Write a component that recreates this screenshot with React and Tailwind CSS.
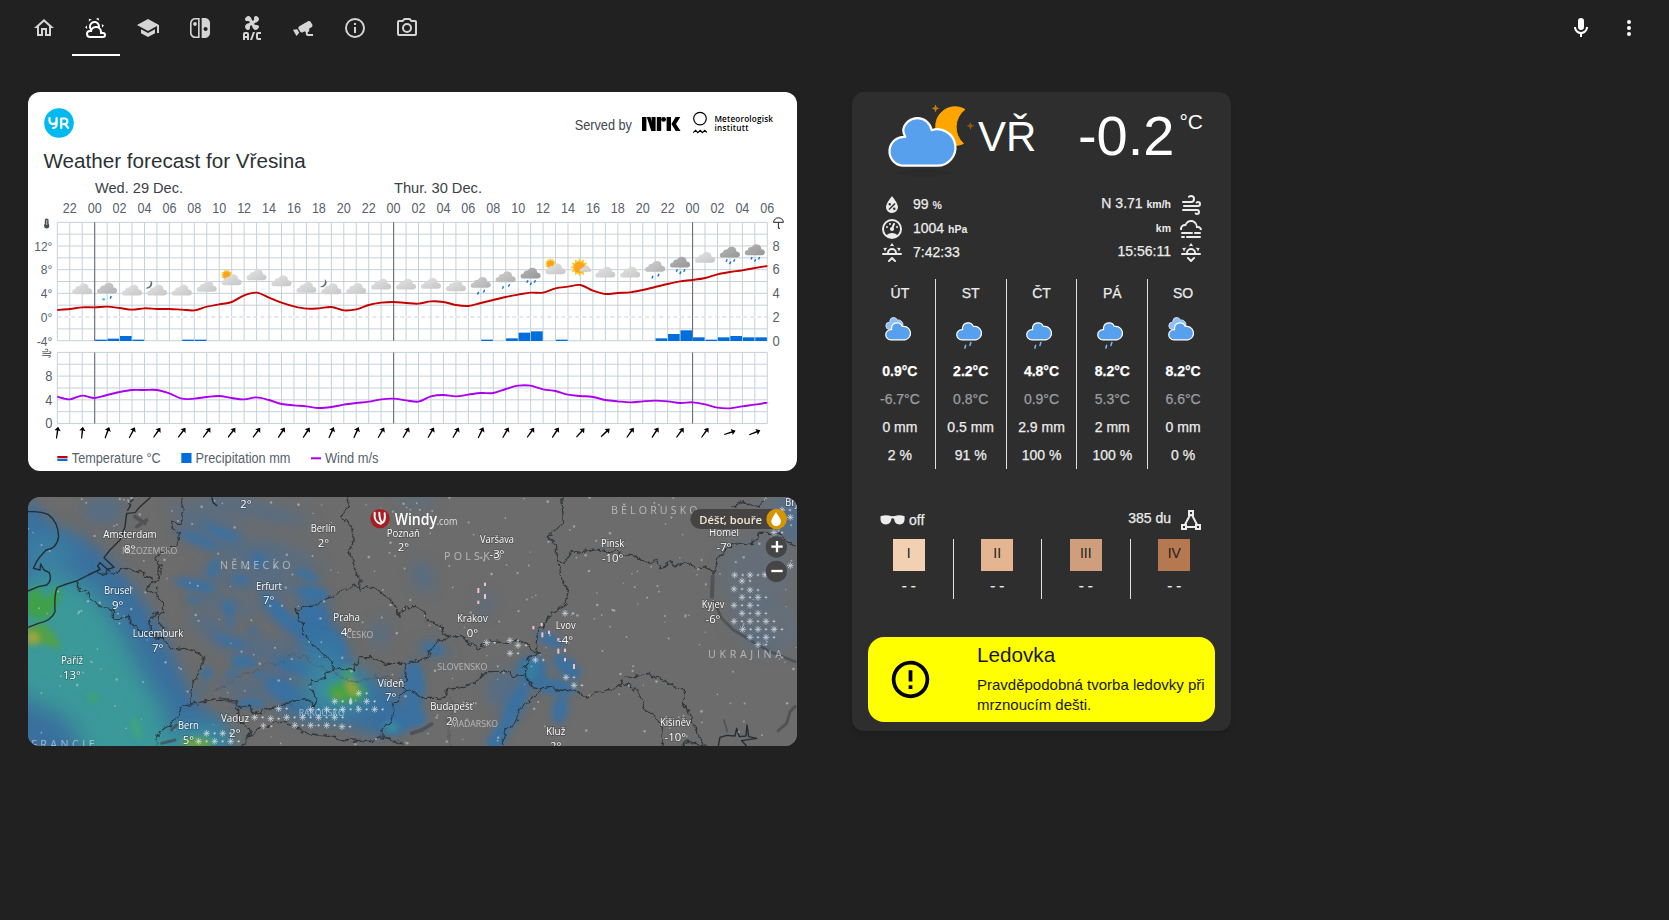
import React from "react";

const P = {
  home: "M12 5.69L17 10.19V18H15V12H9V18H7V10.19L12 5.69M12 3L2 12H5V20H11V14H13V20H19V12H22",
  partly:
    "M12.74,5.47C15.1,6.5 16.35,9.03 15.92,11.46C17.19,12.56 18,14.19 18,16V16.17C18.31,16.06 18.65,16 19,16A3,3 0 0,1 22,19A3,3 0 0,1 19,22H6A4,4 0 0,1 2,18A4,4 0 0,1 6,14H6.27C5,12.45 4.6,10.24 5.5,8.26C6.72,5.5 9.97,4.24 12.74,5.47M11.93,7.3C10.16,6.5 8.09,7.31 7.31,9.07C6.85,10.09 6.93,11.22 7.41,12.13C8.5,10.83 10.16,10 12,10C12.7,10 13.38,10.12 14,10.34C13.94,9.06 13.18,7.86 11.93,7.3M13.55,3.64C13,3.4 12.45,3.23 11.88,3.12L14.37,1.82L15.27,4.71C14.76,4.29 14.19,3.93 13.55,3.64M6.09,4.44C5.6,4.79 5.17,5.19 4.8,5.63L4.91,2.82L7.87,3.5C7.25,3.71 6.65,4.03 6.09,4.44M18,9.71C17.91,9.12 17.78,8.55 17.59,8L19.97,9.5L17.92,11.73C18.03,11.08 18.05,10.4 18,9.71M3.04,11.3C3.11,11.9 3.24,12.47 3.43,13L1.06,11.5L3.1,9.28C3,9.93 2.97,10.61 3.04,11.3M19,18H16V16A4,4 0 0,0 12,12A4,4 0 0,0 8,16H6A2,2 0 0,0 4,18A2,2 0 0,0 6,20H19A1,1 0 0,0 20,19A1,1 0 0,0 19,18Z",
  school: "M12,3L1,9L12,15L21,10.09V17H23V9M5,13.18V17.18L12,21L19,17.18V13.18L12,17L5,13.18Z",
  nswitch:
    "M10.04,20.4H7.12C6.19,20.4 5.3,20 4.64,19.36C4,18.7 3.6,17.81 3.6,16.88V7.12C3.6,6.19 4,5.3 4.64,4.64C5.3,4 6.19,3.62 7.12,3.62H10.04V20.4M7.12,2A5.12,5.12 0 0,0 2,7.12V16.88C2,19.71 4.29,22 7.12,22H11.65V2H7.12M5.11,8C5.11,9.04 5.95,9.88 7,9.88C8.03,9.88 8.87,9.04 8.87,8C8.87,6.96 8.03,6.12 7,6.12C5.95,6.12 5.11,6.96 5.11,8M17.61,11C18.72,11 19.62,11.89 19.62,13C19.62,14.12 18.72,15 17.61,15C16.5,15 15.58,14.12 15.58,13C15.58,11.89 16.5,11 17.61,11M16.88,22A5.12,5.12 0 0,0 22,16.88V7.12C22,4.29 19.71,2 16.88,2H13.65V22H16.88Z",
  ac: "M6.59,0.66C8.93,-1.15 11.47,1.06 12.04,4.5C12.47,4.5 12.89,4.62 13.27,4.84C13.79,4.24 14.25,3.42 14.07,2.5C13.65,0.35 16.06,-1.39 18.35,1.58C20.16,3.92 17.95,6.46 14.5,7.03C14.5,7.46 14.39,7.89 14.16,8.27C14.76,8.78 15.58,9.24 16.5,9.06C18.63,8.64 20.38,11.04 17.41,13.34C15.07,15.15 12.53,12.94 11.96,9.5C11.53,9.5 11.11,9.37 10.74,9.15C10.22,9.75 9.75,10.58 9.93,11.5C10.35,13.64 7.94,15.39 5.65,12.42C3.83,10.07 6.05,7.53 9.5,6.97C9.5,6.54 9.63,6.12 9.85,5.74C9.25,5.23 8.43,4.76 7.5,4.94C5.37,5.36 3.62,2.96 6.59,0.66M5,16H7A2,2 0 0,1 9,18V24H7V22H5V24H3V18A2,2 0 0,1 5,16M5,18V20H7V18H5M12.93,16H15L12.07,24H10L12.93,16M18,16H21V18H18V22H21V24H18A2,2 0 0,1 16,22V18A2,2 0 0,1 18,16Z",
  cctv: "M18.15,4.94C17.77,4.91 17.37,5 17,5.2L8.35,10.2C7.39,10.76 7.07,12 7.62,12.94L9.12,15.53C9.67,16.5 10.89,16.82 11.85,16.27L13.65,15.23C13.92,15.69 14.32,16.06 14.81,16.27V18.04C14.81,19.13 15.7,20 16.81,20H22V18.04H16.81V16.27C17.72,15.87 18.31,14.97 18.31,14C18.31,13.54 18.19,13.11 17.97,12.73L20.5,11.27C21.47,10.71 21.8,9.5 21.24,8.53L19.74,5.94C19.4,5.34 18.79,5 18.15,4.94M6.22,13.17L2,13.87L2.75,15.17L4.75,18.63L5.5,19.93L8.22,16.63L6.22,13.17Z",
  info: "M11,9H13V7H11M12,20C7.59,20 4,16.41 4,12C4,7.59 7.59,4 12,4C16.41,4 20,7.59 20,12C20,16.41 16.41,20 12,20M12,2A10,10 0 0,0 2,12A10,10 0 0,0 12,22A10,10 0 0,0 22,12A10,10 0 0,0 12,2M11,17H13V11H11V17Z",
  camera:
    "M20,4H16.83L15,2H9L7.17,4H4A2,2 0 0,0 2,6V18A2,2 0 0,0 4,20H20A2,2 0 0,0 22,18V6A2,2 0 0,0 20,4M20,18H4V6H8.05L9.88,4H14.12L15.95,6H20V18M12,7A5,5 0 0,0 7,12A5,5 0 0,0 12,17A5,5 0 0,0 17,12A5,5 0 0,0 12,7M12,15A3,3 0 0,1 9,12A3,3 0 0,1 12,9A3,3 0 0,1 15,12A3,3 0 0,1 12,15Z",
  mic: "M12,2A3,3 0 0,1 15,5V11A3,3 0 0,1 12,14A3,3 0 0,1 9,11V5A3,3 0 0,1 12,2M19,11C19,14.53 16.39,17.44 13,17.93V21H11V17.93C7.61,17.44 5,14.53 5,11H7A5,5 0 0,0 12,16A5,5 0 0,0 17,11H19Z",
  dots: "M12,16A2,2 0 0,1 14,18A2,2 0 0,1 12,20A2,2 0 0,1 10,18A2,2 0 0,1 12,16M12,10A2,2 0 0,1 14,12A2,2 0 0,1 12,14A2,2 0 0,1 10,12A2,2 0 0,1 12,10M12,4A2,2 0 0,1 14,6A2,2 0 0,1 12,8A2,2 0 0,1 10,6A2,2 0 0,1 12,4Z",
  humidity:
    "M12,3.25C12,3.25 6,10 6,14C6,17.32 8.69,20 12,20A6,6 0 0,0 18,14C18,10 12,3.25 12,3.25M14.47,9.97L15.53,11.03L9.53,17.03L8.47,15.97M9.75,10A1.25,1.25 0 0,1 11,11.25A1.25,1.25 0 0,1 9.75,12.5A1.25,1.25 0 0,1 8.5,11.25A1.25,1.25 0 0,1 9.75,10M14.25,14.5A1.25,1.25 0 0,1 15.5,15.75A1.25,1.25 0 0,1 14.25,17A1.25,1.25 0 0,1 13,15.75A1.25,1.25 0 0,1 14.25,14.5Z",
  gauge:
    "M12,2A10,10 0 0,0 2,12A10,10 0 0,0 12,22A10,10 0 0,0 22,12A10,10 0 0,0 12,2M12,4A8,8 0 0,1 20,12C20,14.4 19,16.5 17.3,18C15.9,16.7 14,16 12,16C10,16 8.2,16.7 6.7,18C5,16.5 4,14.4 4,12A8,8 0 0,1 12,4M14,5.89C13.62,5.9 13.26,6.15 13.1,6.54L11.81,9.77L11.71,10C11,10.13 10.41,10.6 10.14,11.26C9.73,12.29 10.23,13.45 11.26,13.86C12.29,14.27 13.45,13.77 13.86,12.74C14.12,12.08 14,11.32 13.57,10.76L13.67,10.5L14.96,7.29L14.97,7.26C15.17,6.75 14.92,6.17 14.41,5.96C14.28,5.91 14.15,5.89 14,5.89M10,6A1,1 0 0,0 9,7A1,1 0 0,0 10,8A1,1 0 0,0 11,7A1,1 0 0,0 10,6M7,9A1,1 0 0,0 6,10A1,1 0 0,0 7,11A1,1 0 0,0 8,10A1,1 0 0,0 7,9M17,9A1,1 0 0,0 16,10A1,1 0 0,0 17,11A1,1 0 0,0 18,10A1,1 0 0,0 17,9Z",
  windy:
    "M4,10A1,1 0 0,1 3,9A1,1 0 0,1 4,8H12A2,2 0 0,0 14,6A2,2 0 0,0 12,4C11.45,4 10.95,4.22 10.59,4.59C10.2,5 9.56,5 9.17,4.59C8.78,4.2 8.78,3.56 9.17,3.17C9.9,2.45 10.9,2 12,2A4,4 0 0,1 16,6A4,4 0 0,1 12,10H4M19,12A1,1 0 0,0 20,11A1,1 0 0,0 19,10C18.72,10 18.47,10.11 18.29,10.29C17.9,10.68 17.27,10.68 16.88,10.29C16.5,9.9 16.5,9.27 16.88,8.88C17.42,8.34 18.17,8 19,8A3,3 0 0,1 22,11A3,3 0 0,1 19,14H5A1,1 0 0,1 4,13A1,1 0 0,1 5,12H19M18,18H4A1,1 0 0,1 3,17A1,1 0 0,1 4,16H18A3,3 0 0,1 21,19A3,3 0 0,1 18,22C17.17,22 16.42,21.66 15.88,21.12C15.5,20.73 15.5,20.1 15.88,19.71C16.27,19.32 16.9,19.32 17.29,19.71C17.47,19.89 17.72,20 18,20A1,1 0 0,0 19,19A1,1 0 0,0 18,18Z",
  fog: "M3,15H13A1,1 0 0,1 14,16A1,1 0 0,1 13,17H3A1,1 0 0,1 2,16A1,1 0 0,1 3,15M16,15H21A1,1 0 0,1 22,16A1,1 0 0,1 21,17H16A1,1 0 0,1 15,16A1,1 0 0,1 16,15M1,12A5,5 0 0,1 6,7C7,4.65 9.3,3 12,3C15.43,3 18.24,5.66 18.5,9.03L19,9C21.19,9 22.97,10.76 23,13H21A2,2 0 0,0 19,11H17V10A5,5 0 0,0 12,5C9.5,5 7.45,6.82 7.06,9.19C6.73,9.07 6.37,9 6,9A3,3 0 0,0 3,12C3,12.35 3.06,12.69 3.17,13H1.1L1,12M3,19H5A1,1 0 0,1 6,20A1,1 0 0,1 5,21H3A1,1 0 0,1 2,20A1,1 0 0,1 3,19M8,19H21A1,1 0 0,1 22,20A1,1 0 0,1 21,21H8A1,1 0 0,1 7,20A1,1 0 0,1 8,19Z",
  horizon:
    "M3,12H7A5,5 0 0,1 12,7A5,5 0 0,1 17,12H21A1,1 0 0,1 22,13A1,1 0 0,1 21,14H3A1,1 0 0,1 2,13A1,1 0 0,1 3,12M15,12A3,3 0 0,0 12,9A3,3 0 0,0 9,12H15M12,2L14.39,5.42C13.65,5.15 12.84,5 12,5C11.16,5 10.35,5.15 9.61,5.42L12,2M3.34,7L7.5,6.65C6.9,7.16 6.36,7.78 5.94,8.5C5.5,9.24 5.25,10 5.11,10.79L3.34,7M20.65,7L18.88,10.79C18.74,10 18.47,9.23 18.05,8.5C17.63,7.78 17.1,7.15 16.5,6.64L20.65,7",
  up: "M12.71,16.3L15.82,19.41C16.21,19.8 16.21,20.43 15.82,20.82C15.43,21.21 14.8,21.21 14.41,20.82L12,18.41L9.59,20.82C9.2,21.21 8.57,21.21 8.18,20.82C7.79,20.43 7.79,19.8 8.18,19.41L11.29,16.3C11.5,16.1 11.74,16 12,16C12.26,16 12.5,16.1 12.71,16.3Z",
  down: "M12.71,20.71L15.82,17.6C16.21,17.21 16.21,16.57 15.82,16.18C15.43,15.79 14.8,15.79 14.41,16.18L12,18.59L9.59,16.18C9.2,15.79 8.57,15.79 8.18,16.18C7.79,16.57 7.79,17.21 8.18,17.6L11.29,20.71C11.5,20.9 11.74,21 12,21C12.26,21 12.5,20.9 12.71,20.71Z",
  alert:
    "M11,15H13V17H11V15M11,7H13V13H11V7M12,2C6.47,2 2,6.5 2,12A10,10 0 0,0 12,22A10,10 0 0,0 22,12A10,10 0 0,0 12,2M12,20A8,8 0 0,1 4,12A8,8 0 0,1 12,4A8,8 0 0,1 20,12A8,8 0 0,1 12,20Z",
};

function Icon({ d, className = "size-6" }) {
  return (
    <svg viewBox="0 0 24 24" fill="currentColor" className={className + " shrink-0"}>
      <path d={d} />
    </svg>
  );
}

const TABS = [P.home, P.partly, P.school, P.nswitch, P.ac, P.cctv, P.info, P.camera];

function Toolbar() {
  return (
    <header className="flex h-14 shrink-0 items-stretch justify-between pl-5 pr-7">
      <nav className="flex gap-1">
        {TABS.map((d, i) => (
          <button
            key={i}
            className={
              "flex w-12 items-center justify-center border-b-2 pt-0.5 " +
              (i === 5 ? "-ml-px " : "") +
              (i === 1 ? "border-white text-white" : "border-transparent text-[#d5d5d5]")
            }
          >
            <Icon d={d} />
          </button>
        ))}
      </nav>
      <div className="flex items-center gap-6 text-white">
        <Icon d={P.mic} />
        <Icon d={P.dots} />
      </div>
    </header>
  );
}

/* ---------- Meteogram ---------- */

const X0 = 57.3;
const STEP = 12.456;
const hx = (i) => X0 + STEP * i;
const zy = (z) => 270 + z / 3;

const TEMP = [
  120, 117, 112, 112, 110, 114, 119, 115, 117, 117, 119, 121, 110, 103, 96, 76, 68, 83, 98, 109, 116, 115, 111, 121,
  118, 105, 98, 96, 99, 101, 94, 96, 105, 108, 99, 90, 81, 74, 68, 68, 55, 50, 45, 62, 72, 69, 67, 60, 51, 42, 34, 30,
  24, 13, 6, 1, -6, -12,
];
const WIND = [
  380, 388, 377, 384, 375, 366, 360, 360, 360, 370, 386, 386, 381, 378, 384, 388, 382, 390, 402, 406, 409, 414, 411,
  404, 399, 395, 388, 386, 391, 395, 379, 375, 379, 374, 369, 369, 357, 347, 347, 358, 363, 374, 378, 381, 390, 394,
  397, 394, 392, 394, 399, 397, 403, 413, 415, 409, 404, 398,
];
const RAIN = [
  [3, 209], [4, 206], [5, 198], [6, 209], [10, 209], [11, 209], [34, 209], [36, 205], [37, 188], [38, 184], [40, 209],
  [48, 205], [49, 192], [50, 181], [51, 202], [52, 209], [53, 202], [54, 198], [55, 202], [56, 202],
];
const SKY = [
  [2, 57, "l"], [4, 55, "m", "sleet"], [6, 61, "l"], [8, 61, "l", "moon"], [10, 61, "l"], [12, 50, "l"],
  [14, 30, "l", "sun"], [16, 15, "l"], [18, 33, "l"], [20, 53, "l"], [22, 57, "l", "moon"], [24, 56, "l"],
  [26, 43, "l"], [28, 43, "l"], [30, 41, "l"], [32, 48, "l"], [34, 38, "m", "r2"], [36, 21, "m", "r2"],
  [38, 10, "d", "r3"], [40, -3, "l", "sun"], [42, -8, "fair"], [44, 7, "l"], [46, 7, "l"], [48, -10, "m", "r2"],
  [50, -23, "d", "r3"], [52, -37, "l"], [54, -53, "d", "r3"], [56, -60, "d", "r3"],
];
const ARROWS = [8, 6, 20, 28, 35, 38, 37, 38, 37, 33, 33, 24, 24, 30, 30, 30, 30, 26, 30, 36, 33, 42, 46, 36, 33, 37, 36, 72, 68];

function smooth(values) {
  const pts = values.map((v, i) => [hx(i), zy(v)]);
  let d = `M${pts[0][0]},${pts[0][1]}`;
  for (let i = 0; i < pts.length - 1; i++) {
    const a = pts[Math.max(0, i - 1)];
    const b = pts[i];
    const c = pts[i + 1];
    const e = pts[Math.min(pts.length - 1, i + 2)];
    d += `C${b[0] + (c[0] - a[0]) / 6},${b[1] + (c[1] - a[1]) / 6} ${c[0] - (e[0] - b[0]) / 6},${c[1] - (e[1] - b[1]) / 6} ${c[0]},${c[1]}`;
  }
  return d;
}

const TONES = { l: "url(#cl)", m: "url(#cm)", d: "url(#cd)" };

function GreyCloud({ tone, s = 1 }) {
  return (
    <path
      transform={`scale(${s})`}
      fill={TONES[tone]}
      d="M-7.5,5.2C-9.3,5.2 -10.2,4 -10.1,2.6C-10,1 -8.6,0 -7,0.1C-6.8,-2 -5.2,-3.2 -3,-2.8C-1.8,-5 0,-6 2.4,-5.6C5.6,-5.2 6.6,-2.8 6.4,-0.8C8.6,-0.9 10.1,0.6 10,2.4C9.9,4.2 8.6,5.2 6.8,5.2Z"
    />
  );
}

function Sun({ x, y, r }) {
  const rays = Array.from({ length: 24 }, (_, i) => {
    const a = (Math.PI * i) / 12;
    const q = i % 2 ? r * 0.68 : r;
    return `${x + Math.cos(a) * q},${y + Math.sin(a) * q}`;
  }).join(" ");
  return (
    <g>
      <polygon points={rays} fill="#fccb3c" />
      <circle cx={x} cy={y} r={r * 0.6} fill="#fba31a" />
    </g>
  );
}

function Drops({ xs }) {
  return xs.map(([x, y], k) => (
    <path key={k} d={`M${x + 0.8},${y - 1.3}L${x - 0.3},${y + 1.3}`} stroke="#1371cf" strokeWidth="1.4" />
  ));
}

function SkyIcon({ tone, extra }) {
  if (tone === "fair")
    return (
      <g>
        <Sun x={-1} y={0} r={9.2} />
        <g transform="translate(5 1.5)">
          <GreyCloud tone="l" s={0.58} />
        </g>
      </g>
    );
  return (
    <g>
      {extra === "sun" && <Sun x={-5} y={-5} r={6} />}
      {extra === "moon" && <path d="M-6,-9.3A4.5,4.5 0 0 1 -10.8,-2.2A6,6 0 0 0 -6,-9.3Z" fill="#5c6470" stroke="#5c6470" strokeWidth="0.5" />}
      <GreyCloud tone={tone} />
      {extra === "r2" && <Drops xs={[[-3, 10.5], [3, 8.5]]} />}
      {extra === "r3" && <Drops xs={[[-3.5, 8.2], [0, 10.5], [4, 8.2]]} />}
      {extra === "sleet" && (
        <g>
          <circle cx="-3.4" cy="11" r="1.4" fill="#4cc3ee" />
          <Drops xs={[[3.4, 9]]} />
        </g>
      )}
    </g>
  );
}

const GRID = "#c5d1d9";

function Label({ x, y, w, size = 14, fill = "#56616c", anchor = "start", children }) {
  return (
    <text x={x} y={y} fontSize={size} fill={fill} textAnchor={anchor} textLength={w} lengthAdjust="spacingAndGlyphs">
      {children}
    </text>
  );
}

function Meteogram() {
  const hours = Array.from({ length: 29 }, (_, k) => 2 * k + 1);
  const rowsA = Array.from({ length: 11 }, (_, k) => 222.3 + 11.84 * k);
  const rowsB = Array.from({ length: 7 }, (_, k) => 352.4 + 11.86 * k);
  return (
    <svg viewBox="28 176 769 295" className="block h-[295px] w-[769px]" fontFamily="'Liberation Sans', Arial, sans-serif">
      <defs>
        <linearGradient id="cl" x1="0" x2="1" y1="0" y2="1">
          <stop offset="0" stopColor="#e4e4e4" />
          <stop offset="1" stopColor="#c6c6c6" />
        </linearGradient>
        <linearGradient id="cm" x1="0" x2="1" y1="0" y2="1">
          <stop offset="0" stopColor="#cfcfcf" />
          <stop offset="1" stopColor="#b2b2b2" />
        </linearGradient>
        <linearGradient id="cd" x1="0" x2="1" y1="0" y2="1">
          <stop offset="0" stopColor="#b4b4b4" />
          <stop offset="1" stopColor="#979797" />
        </linearGradient>
      </defs>

      <Label x={95} y={193} w={88} size={15} fill="#3a4247">Wed. 29 Dec.</Label>
      <Label x={394} y={193} w={88} size={15} fill="#3a4247">Thur. 30 Dec.</Label>
      {hours.map((h) => (
        <Label key={h} x={hx(h)} y={213.3} w={14} anchor="middle">
          {String((21 + h) % 24).padStart(2, "0")}
        </Label>
      ))}

      <g stroke={GRID} strokeWidth="1">
        {Array.from({ length: 58 }, (_, i) => (
          <React.Fragment key={i}>
            <line x1={hx(i)} x2={hx(i)} y1="222.3" y2="340.7" />
            <line x1={hx(i)} x2={hx(i)} y1="352.4" y2="423.6" />
          </React.Fragment>
        ))}
        {rowsA.map((y, k) =>
          k === 8 ? (
            <g key={k}>
              <line x1={X0} x2={hx(57)} y1={y} y2={y} stroke="#fff" />
              <line x1={X0} x2={hx(57)} y1={y} y2={y} strokeDasharray="4 3" />
            </g>
          ) : (
            <line key={k} x1={X0} x2={hx(57)} y1={y} y2={y} />
          )
        )}
        {rowsB.map((y, k) => (
          <line key={k} x1={X0} x2={hx(57)} y1={y} y2={y} />
        ))}
      </g>

      {RAIN.map(([i, z]) => (
        <rect key={i} x={hx(i) + 0.4} y={zy(z)} width={STEP - 0.8} height={zy(213) - zy(z)} fill="#006edb" />
      ))}

      <g stroke="#6b7079" strokeWidth="1.1">
        {[3, 27, 51].map((i) => (
          <React.Fragment key={i}>
            <line x1={hx(i)} x2={hx(i)} y1="222.3" y2="340.7" />
            <line x1={hx(i)} x2={hx(i)} y1="352.4" y2="423.6" />
          </React.Fragment>
        ))}
      </g>

      <path d={smooth(TEMP)} fill="none" stroke="#c60000" strokeWidth="1.9" />
      <path d={smooth(WIND)} fill="none" stroke="#aa00f2" strokeWidth="1.9" />

      {SKY.map(([i, z, tone, extra]) => (
        <g key={i} transform={`translate(${hx(i)} ${zy(z)})`}>
          <SkyIcon tone={tone} extra={extra} />
        </g>
      ))}

      {ARROWS.map((a, k) => (
        <g key={k} transform={`translate(${hx(2 * k)} 432.6) rotate(${a})`} fill="#000">
          <path d="M0,-6L3.2,-1.8L0.8,-2.2L0.55,6H-0.55L-0.8,-2.2L-3.2,-1.8Z" />
        </g>
      ))}

      {["12°", "8°", "4°", "0°", "-4°"].map((t, k) => (
        <Label key={t} x={52.3} y={250.8 + 23.68 * k} size={13.5} anchor="end" w={[18, 11.5, 11.5, 11.5, 15.5][k]}>
          {t}
        </Label>
      ))}
      {["8", "6", "4", "2", "0"].map((t, k) => (
        <Label key={t} x={772.4} y={250.8 + 23.68 * k} size={14} w={7.2}>
          {t}
        </Label>
      ))}
      {["8", "4", "0"].map((t, k) => (
        <Label key={t} x={52.5} y={381 + 23.6 * k} size={14} w={7.2} anchor="end">
          {t}
        </Label>
      ))}

      <g fill="#4a4f55">
        <rect x="44.8" y="218.5" width="3.8" height="8" rx="1.9" />
        <circle cx="46.7" cy="225.8" r="2.6" />
        <rect x="46.2" y="220" width="1" height="5" fill="#b9bdc1" />
      </g>
      <g fill="none" stroke="#222" strokeWidth="1">
        <path d="M773.5,222.3C774,219.2 776,217.8 778.4,217.8C780.9,217.8 783,219.2 783.4,222.3Z" />
        <path d="M778.4,222.3V228.3H780" />
      </g>
      <path d={P.windy} fill="#6b7076" transform="translate(40.4 347.6) scale(.5 .46)" />

      <rect x="57.3" y="456" width="10.2" height="2.2" fill="#c60000" />
      <rect x="57.3" y="458.8" width="10.2" height="2.2" fill="#006edb" />
      <Label x={71.8} y={463.4} w={89}>Temperature °C</Label>
      <rect x="181.3" y="453" width="10.2" height="10" fill="#006edb" />
      <Label x={195.5} y={463.4} w={95}>Precipitation mm</Label>
      <rect x="311" y="457.3" width="10" height="2" fill="#aa00f2" />
      <Label x={325} y={463.4} w={53.5}>Wind m/s</Label>
    </svg>
  );
}

function ForecastCard() {
  return (
    <section className="flex h-[379px] flex-col overflow-hidden rounded-[12px] bg-white">
      <div className="flex h-[46px] shrink-0 items-end justify-between pl-[15px] pr-[23px]">
        <svg viewBox="0 0 30 30" className="ml-[0.5px] size-[30px]">
          <circle cx="15" cy="15" r="14.8" fill="#00b9f1" />
          <g fill="none" stroke="#fff" strokeWidth="2.2" strokeLinecap="round" strokeLinejoin="round">
            <path d="M5.5,10V12.6A3.4,3.4 0 0 0 12.6,12.6V10M12.6,12V16.4A3.6,3.6 0 0 1 9,20" />
            <path d="M17.2,20V10.5H21A2.9,2.9 0 0 1 21,16.2H19.5M21.3,16.4L24.2,20" />
          </g>
        </svg>
        <div className="flex h-7 items-start">
          <svg viewBox="0 0 60 20" className="mt-1.5 h-5 w-[60px]" fontFamily="'Liberation Sans', Arial, sans-serif">
            <Label x={0.7} y={14} w={57.3} size={14} fill="#3f464c">Served by</Label>
          </svg>
          <svg viewBox="0 0 40 16" className="ml-2 mt-1.5 h-4 w-10">
            <g fill="#000">
              <rect x="0" y="1" width="4.4" height="14" />
              <path d="M4.8,1H8.4L13,15H9.3Z" />
              <rect x="9.6" y="1" width="4" height="14" />
              <rect x="14.8" y="1" width="4.4" height="14" />
              <circle cx="21.6" cy="3.4" r="2.4" />
              <rect x="24.6" y="1" width="4.4" height="14" />
              <path d="M29.4,8L33.6,1H38.3L34,8L38.6,15H33.8Z" />
            </g>
          </svg>
          <svg viewBox="0 0 16 24" className="ml-2.5 mt-px h-6 w-4" fill="none" stroke="#000" strokeWidth="1.2">
            <circle cx="8" cy="7.6" r="6.3" />
            <path d="M1.2,21.6L3.6,19.4L5.8,21.6L8.2,19.4L10.4,21.6L12.8,19.4L14.8,21.4" />
          </svg>
          <svg viewBox="0 0 60 22" className="ml-1.5 mt-0.5 h-[22px] w-[60px]" fontFamily="'Open Sans', sans-serif" fontWeight="600" fontSize="8.2">
            <text x="0.4" y="9.6" textLength="58.6">Meteorologisk</text>
            <text x="0.4" y="18.6" textLength="34">institutt</text>
          </svg>
        </div>
      </div>
      <h1 className="flex h-[38px] shrink-0 items-end pb-[3px] pl-[15.5px] text-[20.65px] leading-6 text-[#2a3235]">
        Weather forecast for Vřesina
      </h1>
      <Meteogram />
    </section>
  );
}

/* ---------- Rain map ---------- */

function rng(seed) {
  let s = seed;
  return () => ((s = (s * 16807) % 2147483647) / 2147483647);
}
const rand = rng(77);
const SPECKS = Array.from({ length: 300 }, () => [24 + rand() * 2307, 20 + rand() * 750, 2 + rand() * 2]);

const BORDERS = [
  "172,272 178,300 210,312 215,330 245,350 280,360 280,385 300,392 325,375 330,400 355,420 400,440 430,445 450,470 470,478 500,475 556,500 540,540 520,580 512,645",
  "490,22 485,50 490,80 480,100 455,100 458,120 478,128 470,165 440,180 405,195 422,230 418,262 400,280 385,290 388,310 410,305 410,285",
  "405,310 430,340 432,370 405,372 390,395 392,430 430,445",
  "415,375 415,400 440,412 430,445",
  "230,240 235,252 255,248 262,238 285,255 300,235 325,232 340,240 370,248 378,262 400,270",
  "512,645 480,650 470,680 450,705 415,730 412,768",
  "512,645 540,640 575,628 600,632 640,630 660,655 690,645 700,670 780,650 800,640 860,630 880,650 888,630 885,610 870,600 875,575 915,565 915,545 940,540",
  "650,655 650,690 680,700 690,740 665,768",
  "690,740 710,720 760,700 800,695 830,710 850,730 900,735 980,750 1010,755 1060,750 1090,740 1085,720 1110,700 1125,660 1120,640 1130,640",
  "940,540 940,520 905,490 880,465 850,430 850,400 830,375 825,355 835,362 850,350 880,345 920,325 970,300 1000,285 1020,300 1050,290 1100,320 1125,345 1135,378 1160,350 1185,350 1210,365 1220,395 1260,405 1270,425 1285,440",
  "940,540 955,535 1000,540 1020,500 1050,500 1100,520 1150,520 1160,540 1150,590 1160,600 1130,640",
  "1150,525 1170,515 1215,510 1230,480 1250,460 1285,440",
  "1285,440 1330,440 1350,460 1380,475 1410,450 1440,458 1500,450 1520,465 1558,490",
  "980,22 985,50 962,75 995,110 1000,150 990,180 1000,220 1020,270 1018,300",
  "1625,22 1630,95 1585,140 1610,165 1608,210 1630,270 1645,300 1635,345 1600,365 1550,430 1545,460 1558,490",
  "1608,212 1630,215 1660,188 1740,178 1850,200 1890,220 1910,210 1920,235 1955,215 1960,230 2000,215 2030,235 2060,230 2085,250 2090,210 2140,160 2190,170 2215,130 2270,130 2300,150 2330,175",
  "1160,600 1170,600 1210,625 1275,625 1280,595 1330,590 1370,575 1400,545 1470,545 1480,560 1515,555 1510,540 1530,500 1558,490",
  "1515,555 1540,590 1565,597 1590,590 1620,600 1675,605 1700,625 1720,610 1780,600 1810,575",
  "1565,597 1540,625 1505,650 1490,690 1460,720 1445,768",
  "1810,575 1850,600 1880,660 1920,700 1925,768",
  "1820,565 1885,550 1960,585 1990,600 1990,640 2020,700 2040,745 2055,765",
  "1990,768 1990,755 2055,765",
  "2135,50 2170,35 2200,50 2230,40 2240,22",
  "1090,740 1120,750 1150,768",
];
const COASTS = [
  "M24,65C50,64 70,66 85,74C105,88 115,110 116,140C112,165 100,178 78,180L60,200L50,215L40,235L60,240L62,222L72,240L88,248C94,262 92,275 80,285L55,290L24,303",
  "M392,22L360,50L345,68L320,70L315,110L300,150L270,180L252,203L282,232L262,238L240,218L233,228L240,238L205,255L172,272L140,282L112,292C102,310 104,340 105,365C98,382 80,395 55,400L24,412",
  "M575,22L580,38L592,48",
  "M322,62L332,46L326,40L340,28",
  "M2095,768L2100,742L2120,736L2145,738L2150,715L2158,740L2178,738L2181,705L2186,740L2210,745L2165,752L2180,768",
];

const LIGHT = [
  [560, 90, 120, 25, 20], [700, 60, 180, 22, 12], [640, 180, 190, 34, 22], [800, 190, 120, 20, 22], [720, 280, 200, 26, 10],
  [620, 340, 110, 22, 20], [780, 380, 90, 24, 50], [700, 470, 150, 34, 12], [830, 560, 110, 34, 14], [900, 470, 80, 70, 50],
  [720, 600, 140, 26, 10], [560, 400, 60, 26, 30], [1210, 260, 30, 45, -20], [1240, 480, 50, 20, 20], [1395, 340, 16, 40, 0],
  [1080, 430, 24, 40, 0], [250, 60, 60, 40, 0], [1460, 600, 60, 60, 0], [1190, 30, 60, 12, 0], [2320, 90, 50, 70, 0],
  [2220, 450, 60, 14, 25],
];
const HAZE = [[2210, 250, 110, 110, 0], [2240, 400, 120, 80, 20], [2300, 60, 80, 70, 0]];
const BLUE = [
  [525, 285, 62, 17, 12], [535, 150, 65, 12, 22], [660, 270, 22, 14, 10], [580, 235, 16, 32, 20], [625, 355, 18, 22, -20],
  [630, 395, 10, 18, 10], [860, 255, 42, 14, 25], [880, 310, 48, 22, 10], [715, 210, 18, 26, 0], [630, 455, 52, 11, 18],
  [670, 515, 40, 20, 5], [560, 550, 16, 22, 10], [640, 550, 20, 12, -20], [550, 595, 10, 8, 0], [690, 640, 50, 14, 0],
  [720, 555, 22, 10, 0], [790, 600, 60, 30, 30], [780, 370, 80, 22, 48], [700, 420, 12, 10, 0], [520, 330, 24, 10, 10],
  [870, 400, 46, 60, 20], [920, 470, 62, 50, 30], [830, 530, 70, 22, 15], [1180, 590, 34, 80, 0], [1180, 680, 40, 32, 20],
  [1120, 700, 44, 34, 20], [1240, 475, 34, 16, 10], [1535, 540, 46, 44, 0], [1600, 590, 70, 24, 10], [1590, 450, 44, 18, 30],
  [1620, 660, 24, 42, 10], [1480, 660, 26, 90, 25], [1430, 750, 26, 46, 30], [1640, 530, 50, 26, 40], [610, 130, 60, 12, 20],
];

function Blobs({ list, fill, opacity }) {
  return list.map(([x, y, rx, ry, a], i) => (
    <ellipse key={i} cx={x} cy={y} rx={rx} ry={ry} transform={`rotate(${a} ${x} ${y})`} fill={fill} opacity={opacity} />
  ));
}

const FLAKES = [
  [560, 730], [608, 730], [536, 754], [584, 754], [632, 754], [704, 682], [752, 686], [800, 682], [848, 682], [896, 682],
  [944, 682], [730, 708], [824, 706], [872, 706], [920, 706], [966, 710], [872, 658], [920, 658], [968, 658], [1016, 658],
  [1064, 658], [944, 634], [1040, 634], [1016, 610], [776, 656],
  [2144, 255], [2166, 273], [2190, 255], [2142, 297], [2190, 300], [2166, 322], [2214, 322], [2142, 346], [2190, 346],
  [2166, 370], [2214, 370], [2142, 394], [2190, 394], [2238, 394], [2214, 418], [2262, 418], [2190, 442], [2238, 442], [2214, 464], [2168, 418],
  [2311, 227], [2311, 82], [2262, 128], [2235, 254], [2286, 60], [1470, 490], [1494, 466], [1546, 510], [1638, 562], [1662, 586], [1400, 458], [1635, 370], [1470, 452],
];
const SLEET = [[205, 300], [205, 338], [225, 284], [225, 318], [370, 414], [395, 405], [397, 433], [417, 428], [445, 450], [445, 482], [465, 482], [465, 510], [492, 528]];

const CITIES = [
  ["2°", 678, 52], ["Amsterdam", 330, 142, 160], ["8°", 329, 188], ["Brusel", 294, 310, 84], ["9°", 293, 356],
  ["Lucemburk", 414, 440, 152], ["7°", 413, 485], ["Paříž", 156, 521, 66], ["13°", 156, 566], ["Berlín", 910, 125, 76],
  ["2°", 910, 170], ["Erfurt", 747, 297, 78], ["7°", 746, 341], ["Praha", 980, 392, 80], ["4°", 979, 437],
  ["Vídeň", 1113, 588, 80], ["7°", 1112, 632], ["Bern", 505, 716, 62], ["5°", 505, 760], ["Vaduz", 645, 695, 84],
  ["2°", 645, 739], ["Poznaň", 1150, 138, 100], ["2°", 1150, 182], ["Varšava", 1431, 158, 102], ["-3°", 1431, 202],
  ["Krakov", 1357, 395, 92], ["0°", 1357, 439], ["Lvov", 1637, 416, 60], ["-4°", 1637, 460], ["Pinsk", 1778, 170, 70],
  ["-10°", 1778, 214], ["Homel", 2112, 136, 90], ["-7°", 2112, 182], ["Kyjev", 2079, 353, 68], ["-6°", 2079, 398],
  ["Budapešť", 1295, 658, 128], ["2°", 1295, 703], ["Kluž", 1607, 734, 58], ["2°", 1607, 778], ["Kišiněv", 1966, 707, 92],
  ["-10°", 1966, 752], ["Brj", 2314, 46, 36],
];
const LANDS = [
  ["NIZOZEMSKO", 306, 193, 166, 28], ["NĚMECKO", 600, 237, 212, 32, 1], ["ČESKO", 978, 444, 82, 28], ["RAKOUSKO", 836, 677, 138, 28],
  ["FRANCIE", 34, 775, 190, 32, 1], ["POLSKO", 1272, 210, 172, 32, 1], ["SLOVENSKO", 1252, 539, 150, 28], ["MAĎARSKO", 1292, 710, 142, 28],
  ["BĚLORUSKO", 1773, 71, 260, 32, 1], ["UKRAJINA", 2064, 504, 222, 32, 1],
];

function MapCard() {
  return (
    <section className="h-[249px] overflow-hidden rounded-[12px] bg-[#6c6c6c]">
      <svg viewBox="24 21 2307 747" className="block h-[249px] w-[769px]" fontFamily="'Open Sans', 'Noto Sans', sans-serif">
        <defs>
          <filter id="soft" x="-10%" y="-20%" width="120%" height="140%">
            <feGaussianBlur stdDeviation="9" />
          </filter>
          <filter id="wide" x="-10%" y="-20%" width="120%" height="140%">
            <feGaussianBlur stdDeviation="20" />
          </filter>
          <filter id="wider" x="-20%" y="-30%" width="140%" height="160%">
            <feGaussianBlur stdDeviation="34" />
          </filter>
          <filter id="rough" filterUnits="userSpaceOnUse" x="0" y="0" width="2360" height="800">
            <feTurbulence type="fractalNoise" baseFrequency="0.045" numOctaves="3" seed="4" result="n" />
            <feDisplacementMap in="SourceGraphic" in2="n" scale="24" xChannelSelector="R" yChannelSelector="G" />
          </filter>
          <g id="flake" stroke="#ccd6dd" strokeWidth="2.4">
            <path d="M0,-10V10M-10,0H10M-7,-7L7,7M-7,7L7,-7" />
          </g>
        </defs>
        <rect x="0" y="0" width="2360" height="800" fill="#6c6c6c" />

        <g filter="url(#wide)">
          <Blobs list={HAZE} fill="#5f6f80" opacity="0.6" />
          <Blobs list={LIGHT} fill="#44709a" opacity="0.55" />
          <polygon points="-30,10 50,50 120,120 185,140 255,195 310,250 370,330 410,400 450,470 490,560 530,640 620,700 640,820 -30,820" fill="#3b6f9e" />
          <polygon points="840,330 910,330 960,450 1010,540 1130,600 1180,690 1080,740 960,700 850,690 760,660 860,600 880,520" fill="#3b6f9e" />
        </g>
        <g filter="url(#soft)">
          <Blobs list={BLUE} fill="#3672a4" opacity="0.92" />
          <ellipse cx="1530" cy="540" rx="22" ry="26" fill="#347fa0" />
        </g>
        <g filter="url(#wider)">
          <polygon points="-60,300 90,255 200,280 270,370 330,480 370,560 430,660 470,840 210,840 150,690 -60,590" fill="#3a999a" />
          <ellipse cx="80" cy="190" rx="80" ry="60" fill="#3a80a2" />
          <ellipse cx="950" cy="600" rx="90" ry="66" fill="#3a93a0" />
          <ellipse cx="900" cy="500" rx="36" ry="40" fill="#3a85a4" />
          <ellipse cx="540" cy="755" rx="90" ry="40" fill="#3a99a0" />
        </g>
        <g filter="url(#soft)">
          <polygon points="20,310 60,290 75,330 100,300 120,285 118,330 90,380 50,390 20,370" fill="#3fa04a" />
          <polygon points="20,410 70,400 110,440 120,480 70,460 20,470" fill="#53a044" />
          <polygon points="20,425 50,430 60,455 20,462" fill="#a9a43c" />
          <ellipse cx="218" cy="625" rx="14" ry="12" fill="#3fa564" />
          <ellipse cx="350" cy="715" rx="12" ry="36" fill="#3fa57a" transform="rotate(-20 350 715)" />
          <ellipse cx="980" cy="606" rx="56" ry="30" fill="#3fa24a" />
          <ellipse cx="984" cy="555" rx="14" ry="24" fill="#3f9f6a" />
          <ellipse cx="995" cy="592" rx="13" ry="26" fill="#a0a232" transform="rotate(-20 995 592)" />
          <ellipse cx="955" cy="618" rx="12" ry="12" fill="#6da036" />
          <ellipse cx="530" cy="760" rx="46" ry="16" fill="#6aa63a" />
          <ellipse cx="1115" cy="712" rx="22" ry="14" fill="#3a8f9c" />
        </g>

        <g fill="none" strokeLinejoin="round" filter="url(#rough)">
          <g stroke="#2c3236" strokeWidth="4" opacity="0.9">
            {BORDERS.map((p, i) => (
              <polyline key={i} points={p} />
            ))}
          </g>
          <g stroke="#4d5358" strokeWidth="3" opacity="0.55">
            <polyline points="580,605 620,590 650,560 700,545 740,520 790,515 825,490 870,515 920,540 960,560 1000,575 1040,572 1070,555 1110,565 1150,600" />
            <polyline points="1290,620 1300,640 1285,690 1290,768" />
          </g>
        </g>
        <g fill="none" stroke="#1f262b" strokeLinejoin="round" strokeWidth="4.2" opacity="0.9">
          {COASTS.map((p, i) => (
            <path key={i} d={p} />
          ))}
        </g>
        <g fill="none" stroke="#45494c" strokeWidth="11" opacity="0.7" strokeLinecap="round">
          <path d="M2078,260L2076,320" strokeWidth="12" />
          <path d="M2082,335L2105,385L2140,420L2190,450L2240,480L2325,515" strokeWidth="8" />
          <path d="M1175,730L1205,720L1235,702" />
          <path d="M2275,722L2300,700L2310,665L2325,650" strokeWidth="9" />
          <path d="M2112,690L2122,725" strokeWidth="5" />
          <path d="M345,80L375,100M350,110L380,90" />
          <path d="M455,720L470,705M425,760L465,750M600,625L650,640" strokeWidth="9" />
        </g>

        <g fill="#c3c8cc" opacity="0.6">
          {SPECKS.map(([x, y, r], i) => (
            <circle key={i} cx={x} cy={y} r={r} />
          ))}
        </g>
        {FLAKES.map(([x, y], i) => (
          <g key={i}>
            <use href="#flake" x={x} y={y} />
            <path d={`M${x + 20},${y}H${x + 28}M${x + 24},${y - 4}V${y + 4}`} stroke="#ccd6dd" strokeWidth="2.2" />
          </g>
        ))}
        <path d="M992,622C986,632 984,642 992,644C1000,642 998,632 992,622Z" fill="#bcd0d6" />
        {SLEET.map(([x, y], i) => (
          <rect key={i} x={x + 1167} y={y - 6} width="6" height={i % 3 ? 10 : 15} fill="#f7c1c1" />
        ))}

        <g fill="#fff" opacity="0.5">
          {LANDS.map(([t, x, y, w, s, wide]) => (
            <text key={t} x={x} y={y} textLength={w} lengthAdjust={wide ? "spacing" : "spacingAndGlyphs"} fontSize={s}>
              {t}
            </text>
          ))}
        </g>
        <g fill="#fff" fontSize="34" textAnchor="middle" paintOrder="stroke" stroke="#000" strokeOpacity="0.28" strokeWidth="4">
          {CITIES.map(([t, x, y, w], i) => (
            <text key={i} x={x} y={y + 2} textLength={w} lengthAdjust="spacingAndGlyphs">
              {t}
            </text>
          ))}
        </g>

        <circle cx="1080" cy="86" r="29" fill="#a81d22" />
        <path
          d="M1064,68C1062,84 1068,98 1082,101C1094,98 1096,84 1094,70M1078,68C1078,84 1081,92 1086,98"
          fill="none"
          stroke="#fff"
          strokeWidth="6"
          strokeLinecap="round"
        />
        <text x="1124" y="105" fontSize="48" fontWeight="600" fill="#fff" textLength="127" lengthAdjust="spacingAndGlyphs">
          Windy
        </text>
        <text x="1250" y="105" fontSize="33" fill="#fff" opacity="0.75" textLength="62" lengthAdjust="spacingAndGlyphs">
          .com
        </text>

        <rect x="2011" y="57" width="290" height="60" rx="30" fill="#454443" />
        <text x="2038" y="102" fontSize="34" fontWeight="600" fill="#f2e8d5" textLength="188" lengthAdjust="spacingAndGlyphs">
          Déšť, bouře
        </text>
        <circle cx="2270" cy="87" r="31" fill="#d49500" />
        <path d="M2268,66C2260,80 2254,86 2254,94A14.5,14.5 0 0 0 2283,94C2283,86 2276,80 2268,66Z" fill="#fff" />
        <circle cx="2269" cy="171" r="32" fill="#454545" />
        <path d="M2254,170H2288M2271,153V187" stroke="#fff" strokeWidth="7" />
        <circle cx="2269" cy="244" r="32" fill="#454545" />
        <path d="M2254,243H2288" stroke="#fff" strokeWidth="7" />
      </svg>
    </section>
  );
}

/* ---------- Current conditions ---------- */

function BlueCloud({ fill = "#57a0ee", sw = 1.2, stroke = "#fff" }) {
  return (
    <path
      d="M8.3,28.2A7.8,7.8 0 0 1 8.3,12.6C8.7,12.6 9.1,12.6 9.5,12.7A8,8 0 0 1 9.2,9.6A8.4,8.4 0 0 1 25.4,7.9A10.2,10.2 0 0 1 29.4,28.2Z"
      fill={fill}
      stroke={stroke}
      strokeWidth={sw}
      strokeLinejoin="round"
    />
  );
}

function NightCloud() {
  return (
    <svg viewBox="0 0 90 76" className="h-[76px] w-[90px] shrink-0">
      <path d="M80.5,8.5A19.3,19.3 0 1 0 79,42.5A22,22 0 0 1 80.5,8.5Z" transform="translate(-1.6 -2)" fill="#ffa500" stroke="#ffa500" strokeLinejoin="round" />
      <path d="M49.5,1.2L50.6,4.2L53.5,5.3L50.6,6.4L49.5,9.4L48.4,6.4L45.5,5.3L48.4,4.2Z" fill="#c07d10" />
      <path d="M84.5,18.7L85.5,21.7L88.4,22.8L85.5,23.9L84.5,26.9L83.4,23.9L80.5,22.8L83.4,21.7Z" fill="#8a5c14" />
      <ellipse cx="38" cy="70" rx="28" ry="4" fill="#000" opacity="0.06" />
      <path
        d="M16.5,62.7A14.4,14.4 0 1 1 19.3,34A15,15 0 0 1 17.2,27A14.4,14.4 0 0 1 45.6,27.2A18.2,18.2 0 1 1 51,62.7Z"
        fill="#57a0ee"
        stroke="#fff"
        strokeWidth="2.2"
        strokeLinejoin="round"
      />
    </svg>
  );
}

function DayIcon({ rain }) {
  return (
    <svg viewBox="0 0 40 44" className="h-11 w-10">
      {!rain && (
        <g transform="translate(5.6 3.4) scale(.46)">
          <BlueCloud fill="#8fc0f5" stroke="#d6e6f8" sw={2} />
        </g>
      )}
      <g transform="translate(5.4 8.2) scale(.665)">
        <BlueCloud sw={1.8} />
      </g>
      {rain && <path d="M14.6,32.4L13.9,35M19.8,29.6L19,32.4" stroke="#7db4ee" strokeWidth="1.6" strokeLinecap="round" />}
    </svg>
  );
}

function Unit({ children }) {
  return <span className="text-[10.5px] font-bold [-webkit-text-stroke:0px]">{children}</span>;
}

const DAYS = [
  ["ÚT", false, "0.9°C", "-6.7°C", "0 mm", "2 %"],
  ["ST", true, "2.2°C", "0.8°C", "0.5 mm", "91 %"],
  ["ČT", true, "4.8°C", "0.9°C", "2.9 mm", "100 %"],
  ["PÁ", true, "8.2°C", "5.3°C", "2 mm", "100 %"],
  ["SO", false, "8.2°C", "6.6°C", "0 mm", "0 %"],
];

const UV = [
  ["I", "bg-[#f1d1b1]"],
  ["II", "bg-[#e4b590]"],
  ["III", "bg-[#cf9f7d]"],
  ["IV", "bg-[#b67851]"],
];

const LEFT = [
  [P.humidity, "99", "%"],
  [P.gauge, "1004", "hPa"],
  [P.horizon + P.up, "7:42:33", ""],
];
const RIGHT = [
  [P.windy, "N 3.71", "km/h"],
  [P.fog, "", "km"],
  [P.horizon + P.down, "15:56:11", ""],
];

function ConditionsCard() {
  return (
    <section className="flex h-[639px] w-[379px] flex-col rounded-[12px] bg-[#2e2e2e] text-[14px] text-[#ececec] shadow-md [-webkit-text-stroke:0.25px_currentColor]">
      <div className="flex h-[97px] shrink-0 items-start pl-[34px] text-white [-webkit-text-stroke:0px]">
        <div className="mt-[11px]">
          <NightCloud />
        </div>
        <span className="ml-0.5 mt-[21px] w-[62px] text-[42px] leading-[48px]">VŘ</span>
        <span className="ml-auto mt-3 text-[56px] leading-[64px]">-0.2</span>
        <span className="ml-[5px] mr-7 mt-[18px] text-[21px] leading-6">°C</span>
      </div>

      <div className="flex h-[72px] shrink-0 justify-between pl-7 pr-7">
        <ul>
          {LEFT.map(([d, v, u]) => (
            <li key={v} className="flex h-6 items-center">
              <Icon d={d} className="mt-2 size-6" />
              <span className="ml-[9px] mt-[7px]">
                {v} <Unit>{u}</Unit>
              </span>
            </li>
          ))}
        </ul>
        <ul>
          {RIGHT.map(([d, v, u], i) => (
            <li key={i} className="flex h-6 items-center justify-end">
              <span className="mr-2 mt-1">
                {v} {u && <Unit>{u}</Unit>}
              </span>
              <Icon d={d} className="mt-2 size-6" />
            </li>
          ))}
        </ul>
      </div>

      <div className="ml-[13px] mt-[18px] flex h-[190px] w-[353px] shrink-0">
        {DAYS.map(([day, rain, hi, lo, mm, pct], i) => (
          <div
            key={day}
            className={"flex flex-1 flex-col items-center " + (i < 4 ? "border-r border-[#e0e0e0]" : "")}
          >
            <span className="mt-1 h-5 leading-5">{day}</span>
            <div className="mt-2.5">
              <DayIcon rain={rain} />
            </div>
            <span className="flex h-7 items-center font-bold text-white">{hi}</span>
            <span className="flex h-7 items-center text-[#9a9da3]">{lo}</span>
            <span className="flex h-7 items-center">{mm}</span>
            <span className="flex h-7 items-center">{pct}</span>
          </div>
        ))}
      </div>

      <div className="mt-[39px] flex h-6 shrink-0 items-center justify-between pl-7 pr-7">
        <div className="flex items-center gap-[3px]">
          <svg viewBox="0 0 26 12" className="h-3 w-[26px]" fill="currentColor">
            <path d="M0.5,2.2C4,0.8 8,0.8 11.6,2.2Q13,1.6 14,2.2C17.5,0.8 21.5,0.8 24.6,2.2V4.6C24.6,8.4 23.4,10.4 19.6,10.4C16,10.4 14.6,8.4 14,4.8Q12.7,3.6 11.4,4.8C10.9,8.4 9.4,10.4 5.8,10.4C2,10.4 0.5,8.4 0.5,4.6Z" />
          </svg>
          <span>off</span>
        </div>
        <div className="flex items-center">
          <span className="-mt-1 mr-2">385 du</span>
          <svg viewBox="0 0 24 24" className="size-6" fill="none" stroke="currentColor" strokeWidth="2">
            <path d="M10,3H14V7H10ZM3,17H7V21H3ZM17,17H21V21H17ZM11,7L5.8,17M13,7L18.2,17M7,19H17" />
          </svg>
        </div>
      </div>

      <div className="ml-[13px] mt-[7px] flex h-[60px] w-[353px] shrink-0">
        {UV.map(([t, bg], i) => (
          <div key={t} className={"flex flex-1 flex-col items-center " + (i < 3 ? "border-r border-[#e0e0e0]" : "")}>
            <div className={"flex size-8 justify-center pt-1 leading-5 text-[#212121] [-webkit-text-stroke:0px] " + bg}>{t}</div>
            <span className="mt-[5px] text-[15px] leading-5">- -</span>
          </div>
        ))}
      </div>

      <div className="ml-4 mt-[38px] flex h-[85px] w-[347px] shrink-0 rounded-2xl bg-[#ffff00] pl-5 text-[#181810] [-webkit-text-stroke:0px]">
        <Icon d={P.alert} className="mt-5 size-[45px] text-black" />
        <div className="ml-11 whitespace-nowrap pt-1.5">
          <h2 className="text-[20.7px] leading-6">Ledovka</h2>
          <p className="mt-2 text-[15px] leading-5">
            Pravděpodobná tvorba ledovky při
            <br />
            mrznoucím dešti.
          </p>
        </div>
      </div>
    </section>
  );
}

export default function App() {
  return (
    <div className="flex h-[920px] w-[1669px] flex-col overflow-hidden bg-[#212121] font-['Liberation_Sans',Arial,sans-serif]">
      <Toolbar />
      <main className="flex items-start gap-[55px] pl-7 pt-9">
        <div className="flex w-[769px] flex-col gap-[26px]">
          <ForecastCard />
          <MapCard />
        </div>
        <ConditionsCard />
      </main>
    </div>
  );
}
